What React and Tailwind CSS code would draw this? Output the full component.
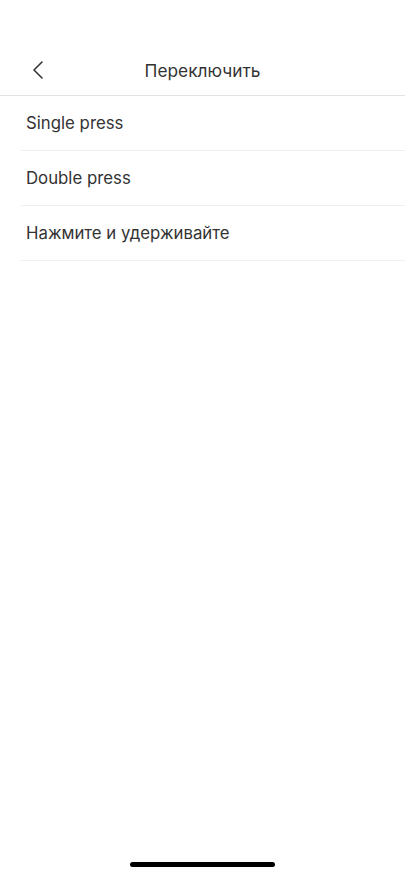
import React from "react";

export default function App() {
  const rows = ["Single press", "Double press", "Нажмите и удерживайте"];
  return (
    <div className="w-[405px] h-[877px] bg-white relative overflow-hidden" style={{ fontFamily: "Inter, 'Noto Sans', sans-serif" }}>
      <div className="h-[96px] border-b border-[#e2e2e2] flex items-end">
        <div className="relative h-[50px] w-full flex items-center justify-center">
          <button className="absolute left-[30px] top-[14px] w-[16px] h-[22px] flex items-center justify-center">
            <svg width="12" height="20" viewBox="0 0 12 20" fill="none">
              <path d="M10 2 L2 10 L10 18" stroke="#333" strokeWidth="1.6" strokeLinecap="round" strokeLinejoin="round" />
            </svg>
          </button>
          <span className="text-[17.3px] text-[#333] pt-[1px]">Переключить</span>
        </div>
      </div>
      <div className="pl-[21px]">
        {rows.map((r) => (
          <div key={r} className="h-[55px] border-b border-[#f0f0f0] flex items-center pl-[5px]">
            <span className="text-[16.8px] text-[#333] pt-[2px]">{r}</span>
          </div>
        ))}
      </div>
      <div className="absolute left-[130px] top-[862px] w-[145px] h-[5px] rounded-full bg-black" />
    </div>
  );
}
